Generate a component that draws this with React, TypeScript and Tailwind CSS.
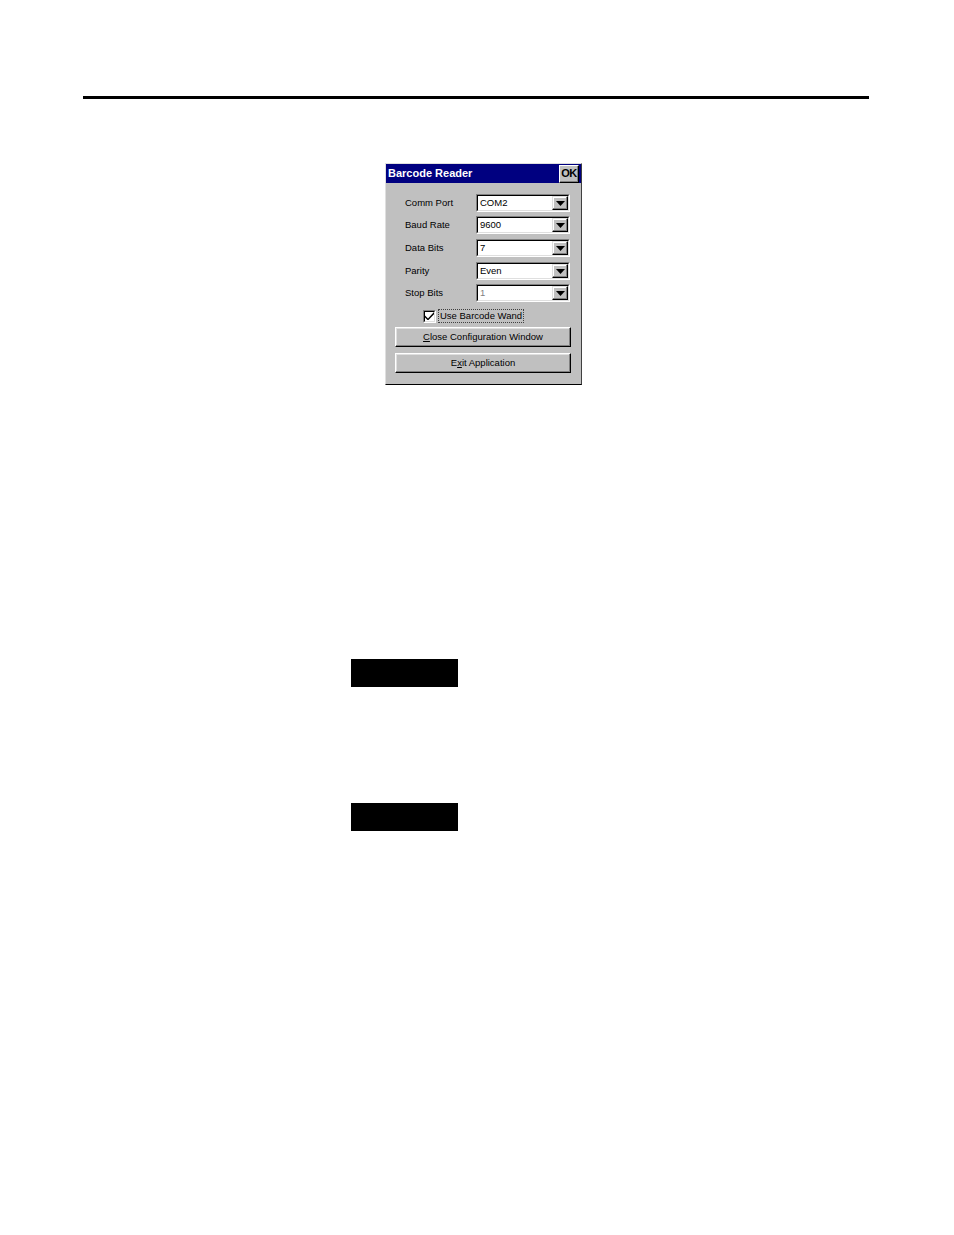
import React from 'react';

const fields = [
  { label: 'Comm Port', value: 'COM2', mt: 'mt-[11px]' },
  { label: 'Baud Rate', value: '9600', mt: 'mt-[4px]' },
  { label: 'Data Bits', value: '7', mt: 'mt-[5px]' },
  { label: 'Parity', value: 'Even', mt: 'mt-[5px]' },
  { label: 'Stop Bits', value: '1', mt: 'mt-[4px]', dim: true },
];

function Arrow() {
  return (
    <div className="w-[16px] h-full bg-[#c0c0c0] border border-t-[#dfdfdf] border-l-[#dfdfdf] border-r-black border-b-black shadow-[inset_-1px_-1px_0_#808080,inset_1px_1px_0_#fff] flex items-center justify-center">
      <svg width="9" height="5" viewBox="0 0 9 5">
        <path d="M0 0h9L4.5 5z" fill="#000" />
      </svg>
    </div>
  );
}

function Combo({ value, dim }: { value: string; dim?: boolean }) {
  return (
    <div className="w-[94px] h-[18px] border border-t-[#808080] border-l-[#808080] border-r-white border-b-white">
      <div className="w-full h-full bg-white border border-t-black border-l-black border-r-[#dfdfdf] border-b-[#dfdfdf] flex items-stretch">
        <div className={`flex-1 pl-[2px] leading-[14px] ${dim ? 'text-[#808080]' : 'text-black'}`}>{value}</div>
        <Arrow />
      </div>
    </div>
  );
}

function Button({ children, mt }: { children: React.ReactNode; mt: string }) {
  return (
    <div className={`${mt} ml-[9px] w-[176px] h-[20px] bg-[#c0c0c0] border border-t-white border-l-white border-r-black border-b-black shadow-[inset_-1px_-1px_0_#808080,inset_1px_1px_0_#dfdfdf] flex items-center justify-center text-black`}>
      {children}
    </div>
  );
}

export default function App() {
  return (
    <div className="w-[954px] h-[1235px] bg-white pt-[96px]" style={{ fontFamily: '"Liberation Sans", Arial, sans-serif' }}>
      <div className="ml-[83px] w-[786px] h-[3px] bg-black" />

      <div className="ml-[385px] mt-[64px] w-[197px] h-[222px] bg-[#c0c0c0] border border-t-[#dfdfdf] border-l-[#dfdfdf] border-r-[#404040] border-b-black text-[9.5px]">
        <div className="h-[19px] bg-[#000080] flex items-center justify-between pl-[2px] pr-[2px]">
          <span className="text-white font-bold text-[11px]">Barcode Reader</span>
          <div className="w-[20px] h-[18px] bg-[#c0c0c0] border border-t-white border-l-white border-r-black border-b-black shadow-[inset_-1px_-1px_0_#808080] flex items-center justify-center font-bold text-[11px] text-black tracking-tighter">
            OK
          </div>
        </div>

        {fields.map((f) => (
          <div key={f.label} className={`${f.mt} flex items-center`}>
            <span className="ml-[19px] w-[71px] text-black">{f.label}</span>
            <Combo value={f.value} dim={f.dim} />
          </div>
        ))}

        <div className="mt-[7px] ml-[37px] flex items-center">
          <div className="w-[13px] h-[13px] border border-t-[#808080] border-l-[#808080] border-r-white border-b-white">
            <div className="w-full h-full bg-white border border-t-black border-l-black border-r-[#dfdfdf] border-b-[#dfdfdf] flex items-center justify-center">
              <svg width="9" height="8" viewBox="0 0 9 8">
                <path d="M0 3.5l3 3 6-6.5v2.2L3 8.5 0 5.6z" fill="#000" />
              </svg>
            </div>
          </div>
          <span className="ml-[2px] px-[1px] border border-dotted border-[#404040] leading-[12px] text-black">Use Barcode Wand</span>
        </div>

        <Button mt="mt-[4px]">
          <span><span className="underline">C</span>lose Configuration Window</span>
        </Button>
        <Button mt="mt-[6px]">
          <span>E<span className="underline">x</span>it Application</span>
        </Button>
      </div>

      <div className="ml-[351px] mt-[274px] w-[107px] h-[28px] bg-black" />
      <div className="ml-[351px] mt-[116px] w-[107px] h-[28px] bg-black" />
    </div>
  );
}
